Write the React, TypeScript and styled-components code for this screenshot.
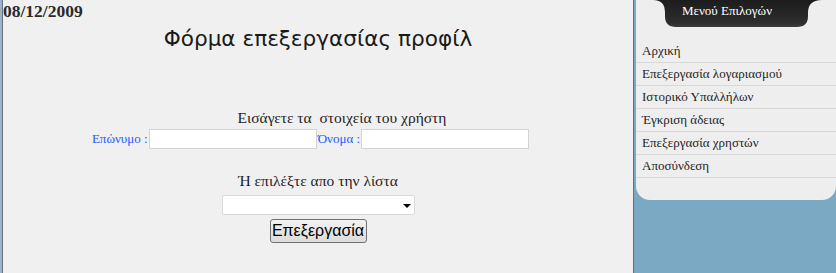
import React from "react";
import styled, { createGlobalStyle } from "styled-components";

const Global = createGlobalStyle`
  html, body { margin: 0; padding: 0; background: #f0f0f0; }
  body { font-family: "Liberation Serif", "Times New Roman", serif; }
`;

const Frame = styled.div`
  display: flex;
  min-height: 273px;
  border-left: 2px solid #9fb3c8;
`;

const Main = styled.div`
  width: 630px;
  border-left: 1px solid #687280;
  border-right: 1px solid #6e6e6e;
  background: #f0f0f0;
  display: flex;
  flex-direction: column;
  align-items: center;
`;

const DateLine = styled.div`
  align-self: flex-start;
  font-family: "Liberation Serif", serif;
  font-weight: bold;
  font-size: 17.5px;
  line-height: 18px;
  color: #2a2a2a;
  margin-top: 2px;
`;

const Title = styled.h1`
  margin: 6px 0 0;
  font-family: "DejaVu Sans", Verdana, sans-serif;
  font-weight: normal;
  font-size: 21.6px;
  line-height: 26px;
  color: #1a1a1a;
`;

const Heading = styled.div<{ $shift?: number; $top: number }>`
  margin-top: ${(p) => p.$top}px;
  padding-left: ${(p) => p.$shift ?? 0}px;
  font-family: "Liberation Serif", serif;
  font-size: 15.5px;
  line-height: 17px;
  color: #1e1e1e;
  white-space: pre;
`;

const FieldRow = styled.div`
  display: flex;
  align-items: center;
  margin-top: 3px;
  margin-left: -14px;
`;

const Label = styled.label`
  font-family: "Liberation Serif", serif;
  font-size: 13px;
  color: #1f5bff;
  margin-right: 1px;
`;

const TextInput = styled.input`
  box-sizing: border-box;
  width: 168px;
  height: 20px;
  margin: 0 1px 0 0;
  border: 1px solid #d4d4d4;
  background: #fff;
  padding: 0 2px;
`;

const SelectBox = styled.div`
  box-sizing: border-box;
  width: 193px;
  height: 20px;
  margin-top: 6px;
  background: #fff;
  border: 1px solid #dadada;
  border-radius: 2px;
  position: relative;
`;

const Caret = styled.span`
  position: absolute;
  right: 3px;
  top: 8px;
  width: 0;
  height: 0;
  border-left: 4px solid transparent;
  border-right: 4px solid transparent;
  border-top: 4px solid #000;
`;

const Button = styled.button`
  margin-top: 4px;
  box-sizing: border-box;
  width: 97px;
  height: 24px;
  padding: 0;
  font-family: "Liberation Sans", Arial, sans-serif;
  font-size: 16px;
  color: #000;
  background: linear-gradient(#f2f2f2, #dcdcdc);
  border: 1px solid #707070;
  border-radius: 3px;
`;

const Sidebar = styled.div`
  flex: 1;
  background: #7ba8c2;
  padding-left: 2px;
`;

const Panel = styled.div`
  background: #eeeeee;
  border-radius: 0 0 14px 14px;
  padding-bottom: 22px;
  display: flex;
  flex-direction: column;
`;

const Tab = styled.div`
  position: relative;
  align-self: flex-start;
  margin-left: 17px;
  width: 169px;
  height: 27px;
  box-sizing: border-box;
  padding-right: 21px;
  display: flex;
  justify-content: center;
`;

const TabShape = styled.svg`
  position: absolute;
  inset: 0;
`;

const TabText = styled.span`
  position: relative;
  font-family: "Liberation Serif", serif;
  font-size: 13px;
  line-height: 15px;
  margin-top: 3px;
  color: #ffffff;
`;

const Menu = styled.ul`
  list-style: none;
  margin: 13px 0 0;
  padding: 0;
`;

const MenuItem = styled.li`
  height: 22px;
  line-height: 22px;
  border-bottom: 1px solid #d8d8d8;
  padding-left: 6px;
  font-family: "Liberation Serif", serif;
  font-size: 13px;
  color: #1e1e1e;
`;

const items = [
  "Αρχική",
  "Επεξεργασία λογαριασμού",
  "Ιστορικό Υπαλλήλων",
  "Έγκριση άδειας",
  "Επεξεργασία χρηστών",
  "Αποσύνδεση",
];

export default function App() {
  return (
    <>
      <Global />
      <Frame>
        <Main>
          <DateLine>08/12/2009</DateLine>
          <Title>Φόρμα επεξεργασίας προφίλ</Title>
          <Heading $top={57} $shift={48}>Εισάγετε τα  στοιχεία του χρήστη</Heading>
          <FieldRow>
            <Label>Επώνυμο :</Label>
            <TextInput type="text" />
            <Label>Όνομα :</Label>
            <TextInput type="text" />
          </FieldRow>
          <Heading $top={23}>Ή επιλέξτε απο την λίστα</Heading>
          <SelectBox>
            <Caret />
          </SelectBox>
          <Button>Επεξεργασία</Button>
        </Main>
        <Sidebar>
          <Panel>
            <Tab>
              <TabShape width="169" height="27" viewBox="0 0 169 27">
                <defs>
                  <linearGradient id="tabg" x1="0" y1="0" x2="0" y2="1">
                    <stop offset="0" stopColor="#1c1c1c" />
                    <stop offset="0.85" stopColor="#2e2e2e" />
                    <stop offset="1" stopColor="#3c3c3c" />
                  </linearGradient>
                </defs>
                <path
                  d="M0,0 H169 C159,0 155,5 155,13 V16 Q155,27 144,27 H23 Q12,27 12,16 V13 C12,5 9,0 0,0 Z"
                  fill="url(#tabg)"
                />
              </TabShape>
              <TabText>Μενού Επιλογών</TabText>
            </Tab>
            <Menu>
              {items.map((t) => (
                <MenuItem key={t}>{t}</MenuItem>
              ))}
            </Menu>
          </Panel>
        </Sidebar>
      </Frame>
    </>
  );
}
